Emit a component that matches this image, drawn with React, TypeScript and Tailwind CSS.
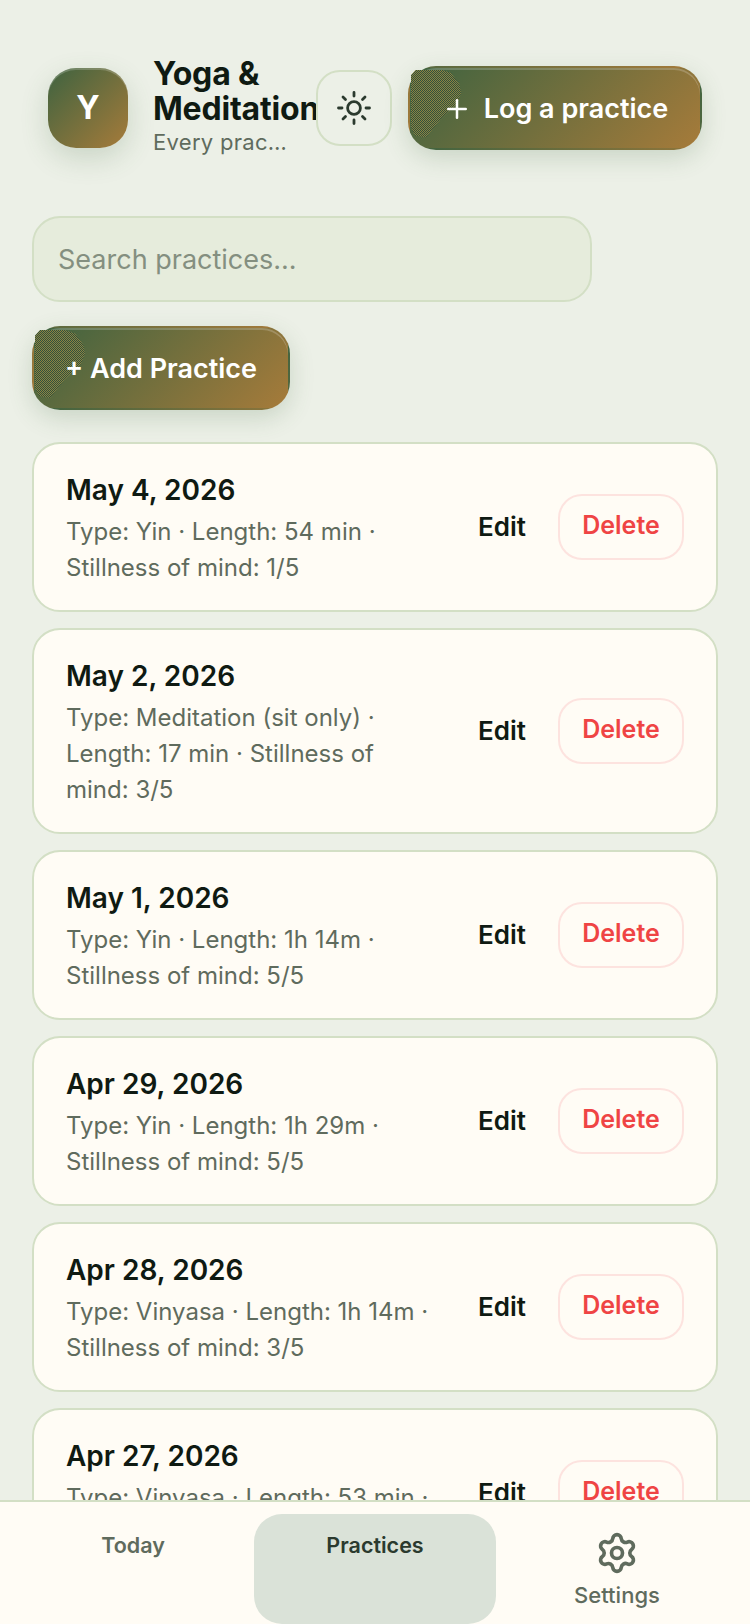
import { Plus, Settings } from "lucide-react";

const PRACTICES = [
  { date: "May 4, 2026", detail: "Type: Yin · Length: 54 min · Stillness of mind: 1/5" },
  { date: "May 2, 2026", detail: "Type: Meditation (sit only) · Length: 17 min · Stillness of mind: 3/5" },
  { date: "May 1, 2026", detail: "Type: Yin · Length: 1h 14m · Stillness of mind: 5/5" },
  { date: "Apr 29, 2026", detail: "Type: Yin · Length: 1h 29m · Stillness of mind: 5/5" },
  { date: "Apr 28, 2026", detail: "Type: Vinyasa · Length: 1h 14m · Stillness of mind: 3/5" },
  { date: "Apr 27, 2026", detail: "Type: Vinyasa · Length: 53 min · Stillness of mind: 2/5" },
];

const GRADIENT = "bg-[linear-gradient(135deg,#3e6340,#a67b3a)] text-white";

const GradientButton = ({ className, children }: { className: string; children: React.ReactNode }) => (
  <button
    className={`relative flex h-[84px] items-center justify-center rounded-[28px] border-2 border-transparent pt-[3px] text-[27px] font-semibold shadow-[0_8px_24px_rgba(63,104,67,0.2),inset_0_2px_0_rgba(255,255,255,0.2)] ${GRADIENT} ${className}`}
  >
    {/* dithered sheen in the top left corner */}
    <span className="absolute top-[2px] left-[1px] h-[68px] w-[50px] bg-[repeating-conic-gradient(#34503a_0_25%,#8a8444_0_50%)] bg-[length:2px_2px] [clip-path:polygon(0_8%,10%_0,60%_0,80%_5%,97%_22%,100%_35%,92%_50%,60%_72%,30%_100%,8%_97%,0_85%)]" />
    <span className="relative flex items-center gap-[12px]">{children}</span>
  </button>
);

const SunIcon = () => (
  <svg width="36" height="36" viewBox="0 0 36 36" fill="none" stroke="currentColor" strokeWidth="2.8" strokeLinecap="round">
    <circle cx="18" cy="18" r="6.4" />
    <path d="M18 2.5v3.5M18 30v3.5M2.5 18H6M30 18h3.5M7 7l2.5 2.5M26.5 26.5L29 29M7 29l2.5-2.5M26.5 9.5L29 7" />
  </svg>
);

const PracticeCard = ({ date, detail }: { date: string; detail: string }) => (
  <div className="flex items-center rounded-[28px] border-2 border-[#d3dfc5] bg-[#fffcf5] px-[32px] py-[24px]">
    <div className="min-w-0 flex-1 pt-[5px]">
      <div className="text-[28px] leading-[35px] font-semibold text-[#0f1a12]">{date}</div>
      <div className="mt-[6px] text-[24px] leading-[36px] text-[#5f6b5d]">{detail}</div>
    </div>
    <div className="ml-[24px] flex shrink-0 items-center gap-[16px]">
      <button className="px-[16px] pb-[2px] text-[26px] font-semibold text-[#0f1a12]">Edit</button>
      <button className="h-[66px] w-[126px] rounded-[24px] border-2 border-[#fde3df] pb-[2px] text-[25px] font-semibold text-[#ef4444]">
        Delete
      </button>
    </div>
  </div>
);

export default function App() {
  return (
    <div className="flex h-[1624px] flex-col overflow-hidden bg-[#ecf0e7] font-['Inter',sans-serif]">
      <main className="min-h-0 flex-1 overflow-hidden px-[32px] pt-[56px]">
        <header className="flex items-center px-[16px]">
          <div
            className={`flex h-[80px] w-[80px] shrink-0 items-center justify-center rounded-[28px] text-[32px] font-bold shadow-[0_10px_28px_rgba(63,104,67,0.2),inset_0_2px_0_rgba(255,255,255,0.2)] ${GRADIENT}`}
          >
            Y
          </div>
          <div className="ml-[25px] w-[139px] shrink-0">
            <h1 className="text-[32px] leading-[35px] font-bold tracking-[-0.2px] text-[#0f1a12]">Yoga & Meditation</h1>
            <p className="truncate text-[22px] leading-[33px] tracking-[0.3px] text-[#5f6b5d]">Every practice counts</p>
          </div>
          <button className="relative ml-[24px] flex h-[76px] w-[76px] shrink-0 items-center justify-center rounded-[24px] border-2 border-[#d3dfc5] bg-[#ecf0e7] text-[#2b3a2e]">
            <SunIcon />
          </button>
          <GradientButton className="ml-[16px] flex-1">
            <Plus size={30} strokeWidth={2} />
            Log a practice
          </GradientButton>
        </header>

        <div className="mt-[57px] flex h-[86px] w-[560px] items-center rounded-[28px] border-2 border-[#d3dfc5] bg-[#e6ecdc] px-[24px] pt-[3px] text-[27px] text-[#848f80]">
          Search practices...
        </div>

        <GradientButton className="mt-[24px] w-[258px]">+ Add Practice</GradientButton>

        <div className="mt-[32px] flex flex-col gap-[16px]">
          {PRACTICES.map(p => (
            <PracticeCard key={p.date} date={p.date} detail={p.detail} />
          ))}
        </div>
      </main>

      <nav className="flex h-[124px] shrink-0 border-t-2 border-[#d3dfc5] bg-[#fffcf5] px-[12px] pt-[12px]">
        <div className="flex flex-1 flex-col items-center pt-[17px] text-[21.5px] leading-[28px] font-semibold text-[#5f6b5d]">Today</div>
        <div className="flex flex-1 flex-col items-center rounded-[28px] bg-[#dae2d8] pt-[17px] text-[21.5px] leading-[28px] font-semibold text-[#2b3a2e]">
          Practices
        </div>
        <div className="flex flex-1 flex-col items-center pt-[17px] text-[22px] leading-[28px] font-medium text-[#5f6b5d]">
          <Settings size={44} strokeWidth={2} />
          <span className="mt-[6px]">Settings</span>
        </div>
      </nav>
    </div>
  );
}
